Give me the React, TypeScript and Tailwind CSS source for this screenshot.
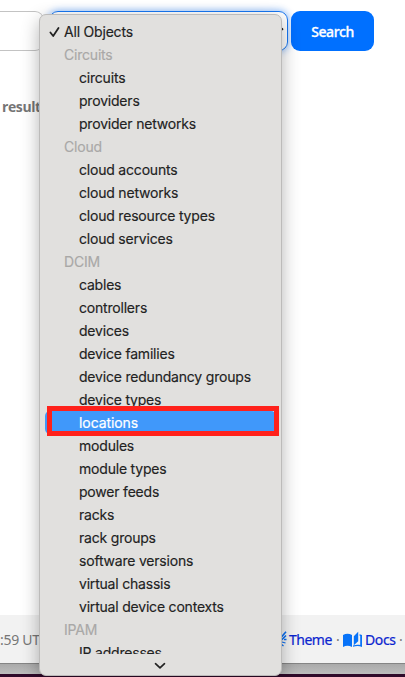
import React from "react";

type Entry = { label: string; group?: boolean };

const entries: Entry[] = [
  { label: "Circuits", group: true },
  { label: "circuits" },
  { label: "providers" },
  { label: "provider networks" },
  { label: "Cloud", group: true },
  { label: "cloud accounts" },
  { label: "cloud networks" },
  { label: "cloud resource types" },
  { label: "cloud services" },
  { label: "DCIM", group: true },
  { label: "cables" },
  { label: "controllers" },
  { label: "devices" },
  { label: "device families" },
  { label: "device redundancy groups" },
  { label: "device types" },
  { label: "locations" },
  { label: "modules" },
  { label: "module types" },
  { label: "power feeds" },
  { label: "racks" },
  { label: "rack groups" },
  { label: "software versions" },
  { label: "virtual chassis" },
  { label: "virtual device contexts" },
  { label: "IPAM", group: true },
  { label: "IP addresses" },
];

function Row({ label, group }: Entry) {
  if (label === "locations") {
    return (
      <div className="relative ml-[5px] mr-[5px] h-[23px] rounded-[5px] bg-[#4098fa] pl-[34px] tracking-[-0.08px] text-white [-webkit-text-stroke:0.2px_white]">
        {label}
        <div className="absolute -top-[5px] left-[2px] h-[30px] w-[232px] border-[5px] border-[#ff211b]" />
      </div>
    );
  }
  return (
    <div className={group ? "h-[23px] pl-[24px] text-[#a9a8a7]" : "h-[23px] pl-[39px]"}>
      {label}
    </div>
  );
}

function Menu() {
  return (
    <div className="absolute left-[39px] top-[14px] flex h-[662px] w-[243px] flex-col rounded-[7px] border border-[#bcbbba] bg-[#e1e0de] pt-[5px] font-['Inter',sans-serif] text-[14px] leading-[23px] tracking-[-0.2px] text-[#222] shadow-[0_6px_18px_rgba(0,0,0,0.3)]">
      <div className="h-[634px] shrink-0 overflow-hidden whitespace-nowrap [-webkit-text-stroke:0.15px]">
        <div className="flex h-[23px] items-center pl-[9px]">
          <svg width="15" height="12" viewBox="0 0 15 12" fill="none" stroke="#222" strokeWidth="1.8" strokeLinecap="round" strokeLinejoin="round">
            <path d="M1.400 6.500 4.200 10 9.500 2" />
          </svg>
          <span>All Objects</span>
        </div>
        {entries.map((e) => (
          <Row key={e.label} {...e} />
        ))}
      </div>
      <svg className="ml-[114px] mt-[8px] shrink-0" width="12" height="8" viewBox="0 0 12 8" fill="none" stroke="#222" strokeWidth="1.7" strokeLinecap="round" strokeLinejoin="round">
        <path d="M1.500 1.700 6 5.800 10.500 1.700" />
      </svg>
    </div>
  );
}

export default function App() {
  return (
    <div className="relative flex h-[677px] w-[405px] flex-col overflow-hidden bg-white font-['Open_Sans',sans-serif]">
      <div className="flex h-[51px] shrink-0 pt-[11px]">
        <div className="h-[40px] w-[44px] rounded-r-[9px] border border-l-0 border-[#c3c3c3]" />
        <div className="relative ml-[5px] h-[40px] w-[239px] rounded-[9px] border border-[#1877f2] shadow-[0_0_7px_1px_rgba(0,110,255,0.4)]">
          <svg className="absolute right-[3px] top-[15px]" width="10" height="7" viewBox="0 0 10 7" fill="none" stroke="#222" strokeWidth="1.8">
            <path d="M1 1.500 5 5 9 1.500" />
          </svg>
        </div>
        <button className="ml-[3px] flex h-[40px] w-[83px] items-center justify-center rounded-[9px] bg-[#0070ff] font-['Noto_Sans',sans-serif] text-[14px] font-medium tracking-[-0.4px] text-white [-webkit-text-stroke:0.3px_white]">
          Search
        </button>
      </div>
      <div className="mt-[46px] pl-[2px] text-[14px] font-bold leading-[20px] tracking-[-0.4px] text-[#757575]">result</div>
      <div className="mt-auto flex h-[48px] shrink-0 items-center bg-[#f2f2f2] font-['Noto_Sans',sans-serif] text-[14px] text-[#777]">
        <span className="w-[278px] tracking-[-0.3px]">:59 UTC</span>
        <svg width="10" height="16" viewBox="0 0 10 16" fill="none" stroke="#0b70f5" strokeWidth="1.6">
          <path d="M0 10 8 .8M3 9.500 8 4.500" />
          <path d="M6 8.500h2.500M4 11l3.500 1M3 13l2.500 2" strokeWidth="1.3" />
        </svg>
        <span className="ml-px w-[43px] tracking-[-0.5px] text-[#0b24cf] [-webkit-text-stroke:0.2px]">Theme</span>
        <span className="ml-[4px] w-[7px]">·</span>
        <svg width="19" height="17" viewBox="0 0 19 17" fill="#0873f8">
          <path d="M0 4C3 2.200 6 2.200 9 4v12C6 14.300 3 14.300 0 16ZM10.800 5.300 15.200.8v9.400l-4.400 4ZM16.600 3.300 19 4v12c-2.700-1.300-6-1.300-9-.2v-1.200c2.600-.9 5-1 7.200-.5V5l-.6-.2Z" />
        </svg>
        <span className="ml-[3px] w-[31px] tracking-[-0.4px] text-[#0b24cf] [-webkit-text-stroke:0.2px]">Docs</span>
        <span className="ml-[3px]">·</span>
      </div>
      <div className="h-[11px] shrink-0 border-t border-[#858585] bg-gradient-to-b from-[#aaa] to-[#bdbdbd]" />
      <div className="h-[3px] shrink-0 bg-[#300a2a]" />
      <Menu />
    </div>
  );
}
